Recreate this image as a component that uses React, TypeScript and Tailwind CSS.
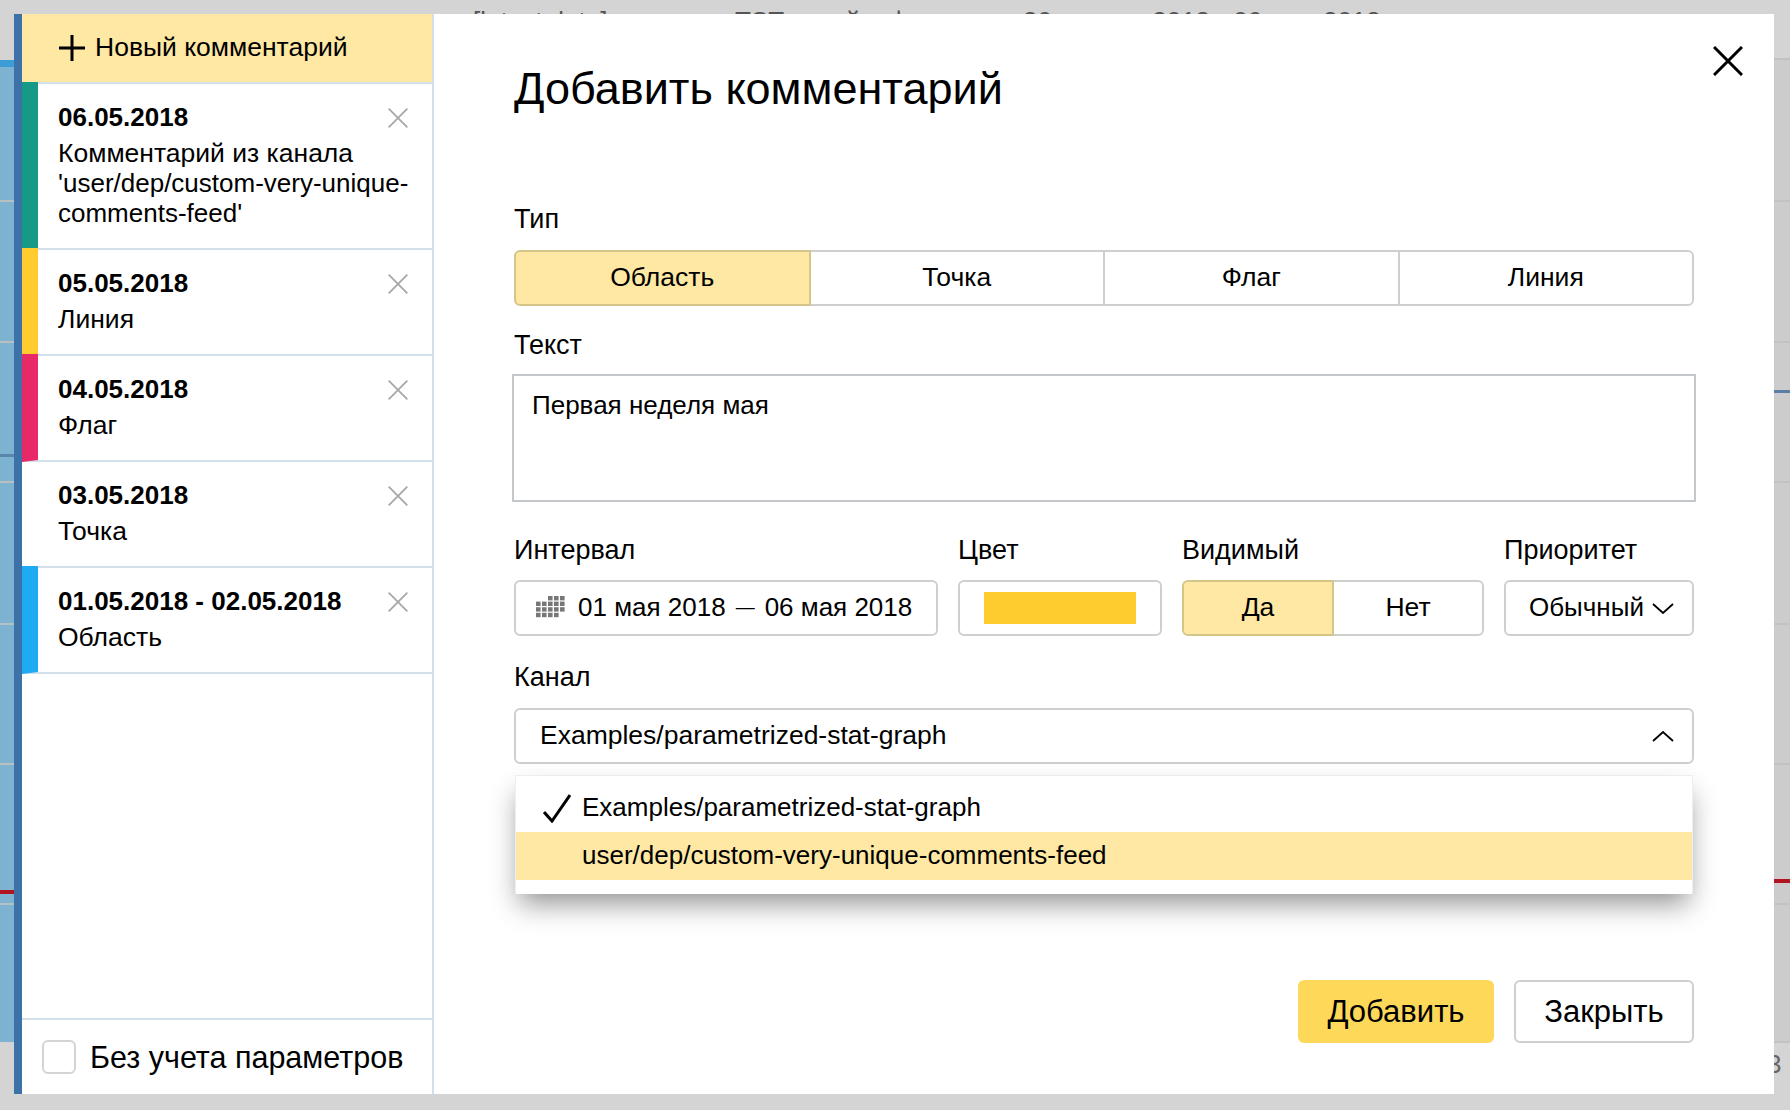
import type { ReactNode } from 'react'

const comments = [
    { date: '06.05.2018', text: 'Комментарий из канала', source: "'user/dep/custom-very-unique-comments-feed'", stripe: 'border-l-[#169a87]' },
    { date: '05.05.2018', text: 'Линия', stripe: 'border-l-[#ffcc2f]' },
    { date: '04.05.2018', text: 'Флаг', stripe: 'border-l-[#e92868]' },
    { date: '03.05.2018', text: 'Точка', stripe: 'border-l-transparent' },
    { date: '01.05.2018 - 02.05.2018', text: 'Область', stripe: 'border-l-[#1eabf2]' },
]

function Cross({ className, width }: { className: string; width: number }) {
    return (
        <svg viewBox="0 0 30 30" className={className} fill="none" stroke="currentColor" strokeWidth={width}>
            <path d="M1 1 L29 29 M29 1 L1 29" />
        </svg>
    )
}

function Label({ children }: { children: ReactNode }) {
    return <div className="text-[27px] leading-[30px] -mt-[1px] mb-[1px]">{children}</div>
}

function Segment({ label, active, first, last }: { label: string; active?: boolean; first?: boolean; last?: boolean }) {
    return (
        <button
            className={`flex-1 h-14 pb-[1px] -ml-[2px] first:ml-0 border-2 text-[26.5px] ${active ? 'relative bg-[#fee8a3] border-[#d6c588]' : 'bg-white border-[#cfcfcf]'} ${first ? 'rounded-l-md' : ''} ${last ? 'rounded-r-md' : ''}`}
        >
            {label}
        </button>
    )
}

function CalendarIcon() {
    const rows = [[2, 3, 4], [0, 1, 2, 3, 4], [0, 1, 2, 3, 4], [0, 1, 2, 3]]
    return (
        <svg viewBox="0 0 30 22" className="w-[30px] h-[22px] shrink-0" fill="#777777">
            {rows.map((cols, y) => cols.map(x => <rect key={`${x}-${y}`} x={x * 6} y={y * 5.6} width={4.6} height={4.4} />))}
        </svg>
    )
}

function Background() {
    const lines = [200, 341, 481, 623, 763, 903]
    return (
        <>
            <svg viewBox="0 0 1790 1110" className="absolute inset-0 w-[1790px] h-[1110px]">
                <rect x="0" y="60" width="14" height="982" fill="#7db2d0" />
                <rect x="0" y="60" width="14" height="7" fill="#3a9ed4" />
                <rect x="0" y="454" width="14" height="3" fill="#5a86ad" />
                <rect x="0" y="890" width="14" height="4" fill="#b1141f" />
                <rect x="1774" y="58" width="16" height="984" fill="#cccccc" />
                <rect x="1774" y="58" width="16" height="2" fill="#c2c2c2" />
                <rect x="1774" y="1041" width="16" height="2" fill="#c2c2c2" />
                {lines.map(y => <rect key={y} x="0" y={y} width="14" height="2" fill="#b9c0c2" />)}
                {lines.map(y => <rect key={y} x="1774" y={y} width="16" height="2" fill="#c2c2c2" />)}
                <rect x="1774" y="390" width="16" height="3" fill="#5a7ea6" />
                <rect x="1774" y="879" width="16" height="4" fill="#b1141f" />
            </svg>
            <div className="absolute left-[473px] top-[6px] text-[26px] leading-[30px] text-[#555555] whitespace-nowrap">[latest data]</div>
            <div className="absolute left-[735px] top-[6px] text-[26px] leading-[30px] text-[#555555] whitespace-nowrap">TST</div>
            <div className="absolute left-[827px] top-[6px] text-[26px] leading-[30px] text-[#555555] whitespace-nowrap">ый</div>
            <div className="absolute left-[888px] top-[6px] text-[26px] leading-[30px] text-[#555555] whitespace-nowrap">фон</div>
            <div className="absolute left-[1023px] top-[6px] text-[26px] leading-[30px] text-[#555555] whitespace-nowrap">30 апреля 2018 - 06 мая 2018</div>
            <div className="absolute left-[1767px] top-[1049px] text-[26px] leading-[30px] text-[#666666]">3</div>
        </>
    )
}

export default function App() {
    return (
        <div className="relative w-[1790px] h-[1110px] overflow-hidden bg-[#d4d4d4] text-black font-['Liberation_Sans',Arial,sans-serif]">
            <Background />

            <div className="absolute left-[14px] top-[14px] w-[1760px] h-[1080px] flex bg-white border-l-8 border-[#3c72a8]">
                <div className="w-[412px] shrink-0 flex flex-col border-r-2 border-[#d3dfeb]">
                    <div className="h-[70px] shrink-0 bg-[#fee8a3] border-b-2 border-[#d3dfeb] flex items-center pl-[37px] gap-[10px] text-[26.5px]">
                        <svg viewBox="0 0 26 26" className="w-[26px] h-[26px] shrink-0" stroke="black" strokeWidth={3}>
                            <path d="M0 13 H26 M13 0 V26" />
                        </svg>
                        <span className="-mt-[1px]">Новый комментарий</span>
                    </div>

                    {comments.map(c => (
                        <div key={c.date} className={`relative -mt-[2px] border-l-[16px] border-b-2 border-b-[#d3dfeb] pl-5 pr-[20px] pt-5 pb-5 text-[26.5px] leading-[30px] ${c.stripe}`}>
                            <div className="font-bold text-[26px] mb-[6px]">{c.date}</div>
                            <div>{c.text}</div>
                            {c.source && <div className="text-[26px]">{c.source}</div>}
                            <Cross className="absolute right-[24px] top-[26px] w-5 h-5 text-[#a6a6a6]" width={2.6} />
                        </div>
                    ))}

                    <div className="mt-auto h-[76px] shrink-0 border-t-2 border-[#d3dfeb] flex items-center pl-5 gap-[14px] text-[30.5px]">
                        <span className="w-[34px] h-[34px] border-2 border-[#d4d4d4] rounded-md" />
                        <span className="mt-[2px]">Без учета параметров</span>
                    </div>
                </div>

                <div className="relative flex-1 flex flex-col pl-20 pr-20 pt-[50px] pb-[51px]">
                    <h1 className="text-[45px] leading-[50px]">Добавить комментарий</h1>
                    <Cross className="absolute right-[31px] top-[32px] w-[30px] h-[30px] text-black" width={3} />

                    <div className="mt-[91px] mb-[15px]"><Label>Тип</Label></div>
                    <div className="flex">
                        <Segment label="Область" active first />
                        <Segment label="Точка" />
                        <Segment label="Флаг" />
                        <Segment label="Линия" last />
                    </div>

                    <div className="mt-[25px] mb-[13px]"><Label>Текст</Label></div>
                    <div className="-mx-[2px] h-[128px] border-2 border-[#c4c8cc] px-[18px] pt-[14px] text-[26px] leading-[30px]">Первая неделя мая</div>

                    <div className="mt-[34px] flex justify-between">
                        <div className="w-[424px]">
                            <div className="mb-[15px]"><Label>Интервал</Label></div>
                            <div className="h-14 pb-[2px] border-2 border-[#cfcfcf] rounded-md flex items-center pl-[20px] text-[26px] whitespace-nowrap">
                                <CalendarIcon />
                                <span className="ml-3">01 мая 2018</span>
                                <span className="mx-[10px] text-[19px]">—</span>
                                <span>06 мая 2018</span>
                            </div>
                        </div>
                        <div className="w-[204px]">
                            <div className="mb-[15px]"><Label>Цвет</Label></div>
                            <div className="h-14 border-2 border-[#cfcfcf] rounded-md flex items-center justify-center">
                                <div className="w-[152px] h-8 bg-[#ffcc2f]" />
                            </div>
                        </div>
                        <div className="w-[302px]">
                            <div className="mb-[15px]"><Label>Видимый</Label></div>
                            <div className="flex">
                                <Segment label="Да" active first />
                                <Segment label="Нет" last />
                            </div>
                        </div>
                        <div className="w-[190px]">
                            <div className="mb-[15px]"><Label>Приоритет</Label></div>
                            <div className="h-14 border-2 border-[#cfcfcf] rounded-md flex items-center pl-[23px] gap-[8px] text-[26px]">
                                <span className="-mt-[2px]">Обычный</span>
                                <svg viewBox="0 0 22 11" className="w-[22px] h-[11px]" fill="none" stroke="black" strokeWidth={1.8}>
                                    <path d="M1 1 L11 10 L21 1" />
                                </svg>
                            </div>
                        </div>
                    </div>

                    <div className="mt-[27px] mb-[15px]"><Label>Канал</Label></div>
                    <div className="relative">
                        <div className="h-14 border-2 border-[#cfcfcf] rounded-md flex items-center justify-between pl-[24px] pr-[18px] text-[26.5px]">
                            <span>Examples/parametrized-stat-graph</span>
                            <svg viewBox="0 0 22 11" className="w-[22px] h-[11px]" fill="none" stroke="black" strokeWidth={1.8}>
                                <path d="M1 10 L11 1 L21 10" />
                            </svg>
                        </div>

                        <div className="absolute left-[1px] right-[1px] top-[67px] z-10 bg-white border-x border-t border-[#eeeeee] pt-[8px] pb-[14px] text-[26px] shadow-[0_14px_26px_-4px_rgba(0,0,0,0.42)]">
                            <div className="relative h-12 pb-[2px] flex items-center pl-[66px]">
                                <svg viewBox="0 0 28 29" className="absolute left-[27px] top-[10px] w-7 h-[29px]" fill="none" stroke="black" strokeWidth={3}>
                                    <path d="M1 18 L9 27 L27 1" />
                                </svg>
                                Examples/parametrized-stat-graph
                            </div>
                            <div className="h-12 pb-[2px] flex items-center pl-[66px] bg-[#fee8a3]">user/dep/custom-very-unique-comments-feed</div>
                        </div>
                    </div>

                    <div className="mt-auto flex justify-end gap-5 text-[31px]">
                        <button className="w-[196px] h-[63px] pt-[2px] bg-[#fed859] rounded-md">Добавить</button>
                        <button className="w-[180px] h-[63px] pt-[2px] border-2 border-[#cfcfcf] rounded-md">Закрыть</button>
                    </div>
                </div>
            </div>
        </div>
    )
}
